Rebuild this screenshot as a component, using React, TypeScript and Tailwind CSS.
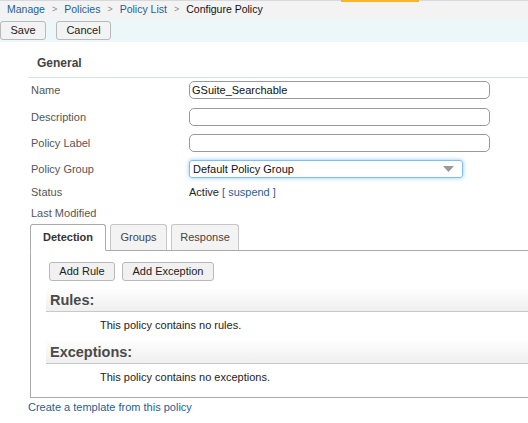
export default function App() {
  const font = { fontFamily: '"Liberation Sans", Arial, sans-serif' };
  return (
    <div className="w-[528px] h-[423px] overflow-hidden bg-white text-[11px] text-[#333]" style={font}>
      {/* Breadcrumb */}
      <div className="relative h-[19px] bg-[#f3f3f3] border-t border-[#d6d9dc] flex items-center pl-[7px] gap-[7px] text-[10.5px]">
        <div className="absolute top-[-1px] left-[341px] w-[78px] h-[2px] bg-[#f7b52b]" />
        <a className="text-[#1f5f8f]">Manage</a>
        <span className="text-[#888] text-[9px]">&gt;</span>
        <a className="text-[#1f5f8f]">Policies</a>
        <span className="text-[#888] text-[9px]">&gt;</span>
        <a className="text-[#1f5f8f]">Policy List</a>
        <span className="text-[#888] text-[9px]">&gt;</span>
        <span className="text-[#111]">Configure Policy</span>
      </div>

      {/* Toolbar */}
      <div className="h-[23px] bg-[#ebf7f9] flex items-center gap-[10px]">
        <button className="w-[46px] h-[19px] rounded-[3px] border border-[#b9b9b9] bg-[#f3f3f3] text-[#222] text-[11px]">Save</button>
        <button className="w-[55px] h-[19px] rounded-[3px] border border-[#b9b9b9] bg-[#f3f3f3] text-[#222] text-[11px]">Cancel</button>
      </div>

      {/* General */}
      <div className="pl-[28px]">
        <div className="h-[36px] flex items-end pb-[5px] pl-[9px] border-b border-[#d5e0e8] font-bold text-[12px] text-[#444]">General</div>

        <div className="pl-[3px]">
          <div className="flex h-[27px] pt-[3px]">
            <div className="w-[158px] text-[#555] pt-[1px]">Name</div>
            <div className="w-[301px] h-[18px] border border-[#999] rounded-[5px] px-[2px] flex items-center text-[#111]">GSuite_Searchable</div>
          </div>
          <div className="flex h-[26px] pt-[3px]">
            <div className="w-[158px] text-[#555] pt-[1px]">Description</div>
            <div className="w-[301px] h-[18px] border border-[#999] rounded-[5px]" />
          </div>
          <div className="flex h-[26px] pt-[3px]">
            <div className="w-[158px] text-[#555] pt-[1px]">Policy Label</div>
            <div className="w-[301px] h-[18px] border border-[#999] rounded-[5px]" />
          </div>
          <div className="flex h-[26px] pt-[3px]">
            <div className="w-[158px] text-[#555] pt-[1px]">Policy Group</div>
            <div className="w-[274px] h-[18px] border border-[#7fbef0] rounded-[3px] shadow-[0_0_4px_#8cc8f5] flex items-center justify-between pl-[3px] pr-[8px] text-[#111]">
              <span>Default Policy Group</span>
              <svg width="11" height="6" viewBox="0 0 11 6"><path d="M0 0h11L5.5 6z" fill="#999" /></svg>
            </div>
          </div>
          <div className="flex h-[18px] items-center">
            <div className="w-[158px] text-[#555]">Status</div>
            <div className="text-[#222]">
              Active <span className="text-[#1f5f8f]">[</span> <a className="text-[#1f5f8f]">suspend</a> <span className="text-[#1f5f8f]">]</span>
            </div>
          </div>
          <div className="h-[23px] pt-[4px] text-[#555]">Last Modified</div>
        </div>
      </div>

      {/* Tabs */}
      <div className="ml-[30px]">
        <div className="flex items-end gap-[4px] h-[27px] border-b border-[#aaa]">
          <div className="h-[27px] w-[76px] -mb-px border border-[#aaa] border-b-white bg-white rounded-t-[3px] flex items-center justify-center font-bold text-[#333]">Detection</div>
          <div className="h-[26px] w-[57px] border border-[#c6c6c6] border-b-0 bg-[#f3f3f3] rounded-t-[3px] flex items-center justify-center text-[#444]">Groups</div>
          <div className="h-[26px] w-[68px] border border-[#c6c6c6] border-b-0 bg-[#f3f3f3] rounded-t-[3px] flex items-center justify-center text-[#444]">Response</div>
        </div>
        <div className="border-l border-b border-[#aaa] h-[147px] pt-[11px]">
          <div className="flex gap-[7px] pl-[18px]">
            <button className="w-[66px] h-[19px] rounded-[3px] border border-[#b9b9b9] bg-[#f1f1f1] text-[#222] text-[11px]">Add Rule</button>
            <button className="w-[92px] h-[19px] rounded-[3px] border border-[#b9b9b9] bg-[#f1f1f1] text-[#222] text-[11px]">Add Exception</button>
          </div>
          <div className="ml-[15px] mt-[6px] h-[25px] pl-[4px] flex items-end bg-gradient-to-b from-white to-[#efefef] border-b border-[#c8c8c8] font-bold text-[14.5px] text-[#4a4a4a] leading-[22px]">Rules:</div>
          <div className="pl-[69px] h-[27px] pt-[5px] text-[#222]">This policy contains no rules.</div>
          <div className="ml-[15px] h-[25px] pl-[4px] flex items-end bg-gradient-to-b from-white to-[#efefef] border-b border-[#c8c8c8] font-bold text-[14.5px] text-[#4a4a4a] leading-[22px]">Exceptions:</div>
          <div className="pl-[69px] pt-[5px] text-[#222]">This policy contains no exceptions.</div>
        </div>
      </div>
      <a className="block ml-[28px] mt-[1px] text-[#1f5f8f]">Create a template from this policy</a>
    </div>
  );
}
